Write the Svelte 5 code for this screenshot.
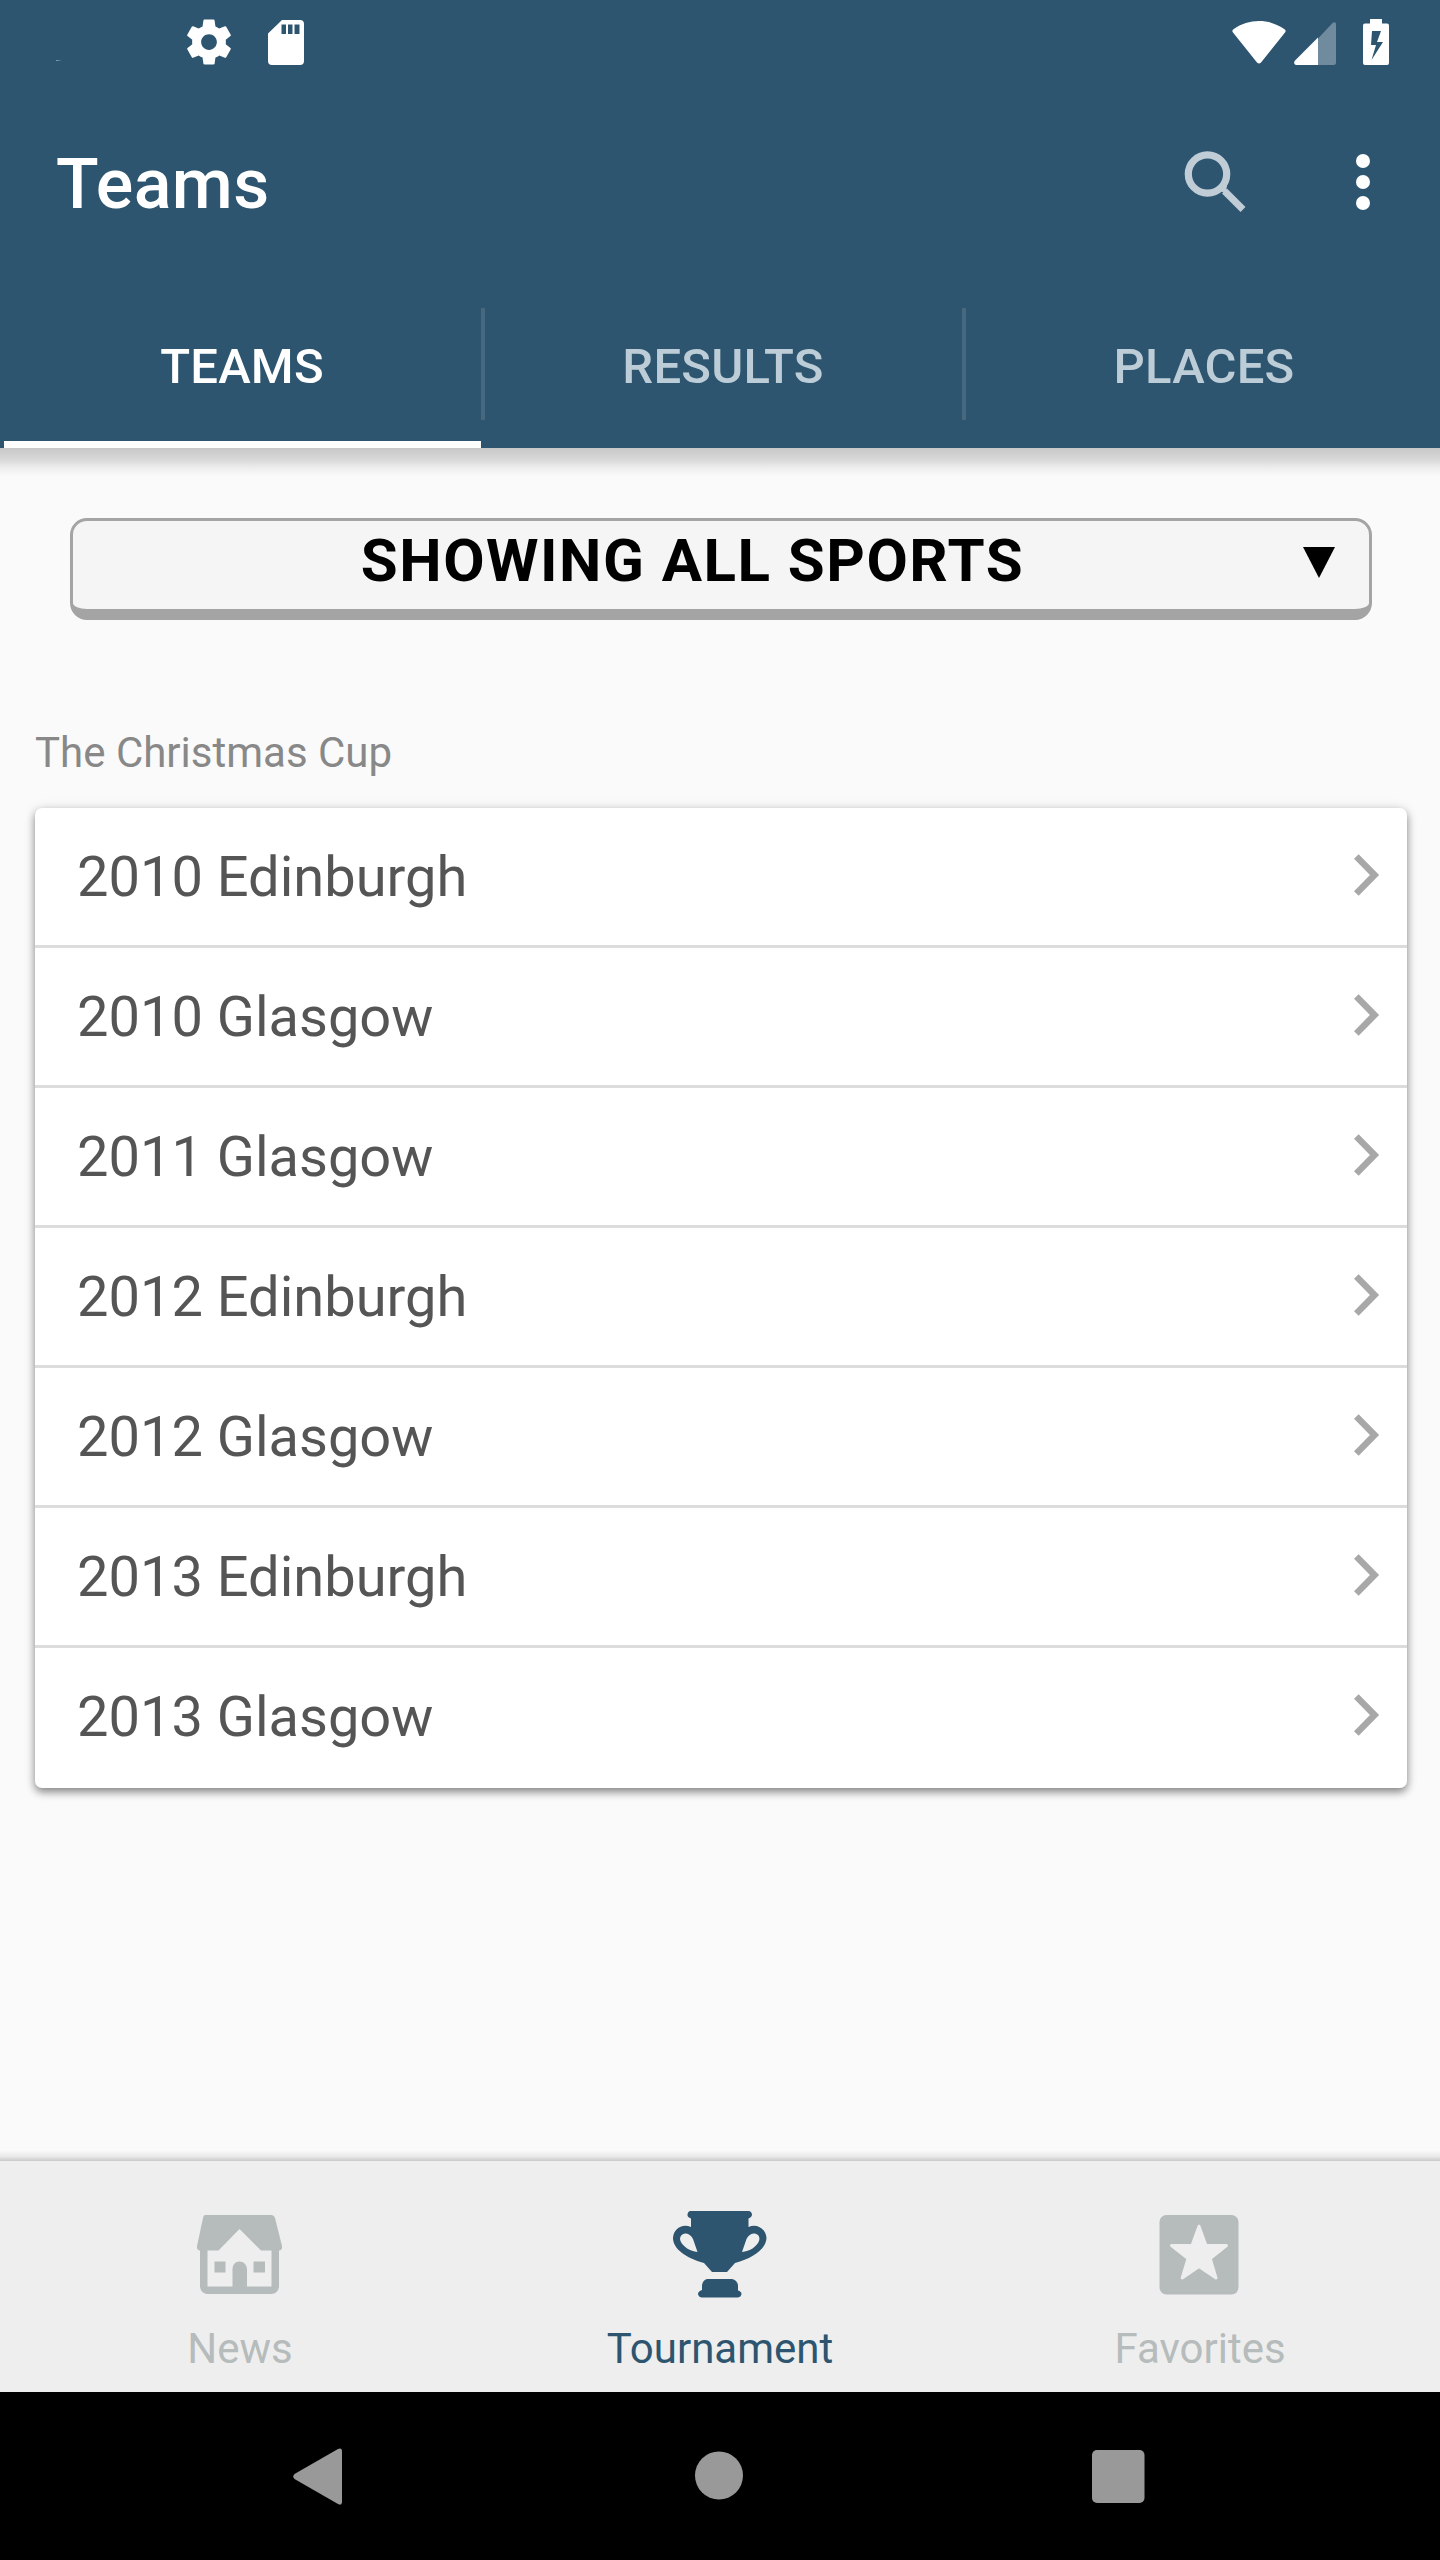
<script lang="ts">
	interface Team {
		year: number;
		city: string;
	}

	const tabs = ['Teams', 'Results', 'Places'];
	const teams: Team[] = [
		{ year: 2010, city: 'Edinburgh' },
		{ year: 2010, city: 'Glasgow' },
		{ year: 2011, city: 'Glasgow' },
		{ year: 2012, city: 'Edinburgh' },
		{ year: 2012, city: 'Glasgow' },
		{ year: 2013, city: 'Edinburgh' },
		{ year: 2013, city: 'Glasgow' }
	];
	const sections = ['News', 'Tournament', 'Favorites'];

	let activeTab = $state('Teams');
	let activeSection = $state('Tournament');
</script>

<div class="screen">
	<header>
		<div class="status-bar">
			<div class="status-group">
				<svg class="trace" width="6" height="2" viewBox="0 0 6 2"><path d="M0 0h6L0 1z" fill="#8aa6b6" /></svg>
				<svg class="gear" width="54" height="54" viewBox="0 0 24 24" fill="#fff">
					<path d="M19.43 12.98c.04-.32.07-.64.07-.98s-.03-.66-.07-.98l2.11-1.65c.19-.15.24-.42.12-.64l-2-3.46c-.12-.22-.39-.3-.61-.22l-2.49 1c-.52-.4-1.08-.73-1.69-.98l-.38-2.65C14.46 2.18 14.25 2 14 2h-4c-.25 0-.46.18-.49.42l-.38 2.65c-.61.25-1.17.59-1.69.98l-2.49-1c-.23-.09-.49 0-.61.22l-2 3.46c-.13.22-.07.49.12.64l2.11 1.65c-.04.32-.07.65-.07.98s.03.66.07.98l-2.11 1.65c-.19.15-.24.42-.12.64l2 3.46c.12.22.39.3.61.22l2.49-1c.52.4 1.08.73 1.69.98l.38 2.65c.03.24.24.42.49.42h4c.25 0 .46-.18.49-.42l.38-2.65c.61-.25 1.17-.59 1.69-.98l2.49 1c.23.09.49 0 .61-.22l2-3.46c.12-.22.07-.49-.12-.64l-2.11-1.65zM12 15.5c-1.93 0-3.5-1.57-3.5-3.5s1.57-3.5 3.5-3.5 3.5 1.57 3.5 3.5-1.57 3.5-3.5 3.5z" />
				</svg>
				<svg width="36" height="45" viewBox="0 0 36 45">
					<path fill="#fff" fill-rule="evenodd" d="M14 0H32Q36 0 36 4V41Q36 45 32 45H4Q0 45 0 41V13.500zM13.500 4.500v9.500h4.500v-9.500zM20 4.500v9.500h4.500v-9.500zM26.500 4.500v9.500h5v-9.500z" />
				</svg>
			</div>
			<div class="status-group">
				<svg width="54" height="43" viewBox="0 0 54 43">
					<path fill="#fff" d="M1 11.500Q-.5 9.500 1.500 8.200C17-2.600 37-2.600 52.500 8.200Q54.500 9.500 53 11.500L29 41.500Q27 43.500 25 41.500z" />
				</svg>
				<svg class="signal" width="42" height="43" viewBox="0 0 42 43">
					<path fill="#fff" fill-opacity=".32" d="M24 16.500L38.800.8Q42-1 42 2.500V40.500Q42 43 39.500 43H24z" />
					<path fill="#fff" d="M24 15.500V43H2Q-1 42 .8 38.800z" />
				</svg>
				<svg class="battery" width="26" height="46" viewBox="0 0 26 46">
					<path fill="#fff" fill-rule="evenodd" d="M7 0H19V4.500H24Q26 4.500 26 6.500V44Q26 46 24 46H2Q0 46 0 44V6.500Q0 4.500 2 4.500H7zM9 12L8 26h5L8.500 41 20 23h-6l4-11z" />
				</svg>
			</div>
		</div>
		<div class="toolbar">
			<h1>Teams</h1>
			<svg width="62" height="62" viewBox="0 0 62 62" fill="none" stroke="#c0cdd6">
				<circle cx="23.500" cy="23" r="19.200" stroke-width="7.200" />
				<path d="M37.500 37l4.500 1.500M40.500 40L59 58.500" stroke-width="7" />
			</svg>
			<svg class="more" width="14" height="56" viewBox="0 0 14 56" fill="#fff">
				<circle cx="7" cy="7" r="7" />
				<circle cx="7" cy="28" r="7" />
				<circle cx="7" cy="49" r="7" />
			</svg>
		</div>
		<nav class="tabs">
			{#each tabs as tab}
				<button class="tab" class:active={tab === activeTab} onclick={() => (activeTab = tab)}>{tab}</button>
			{/each}
		</nav>
	</header>

	<main>
		<button class="filter">
			<span>Showing all sports</span>
			<svg width="32" height="31" viewBox="0 0 32 31"><path d="M0 0h32L16 31z" /></svg>
		</button>

		<h2>The Christmas Cup</h2>
		<ul class="card">
			{#each teams as team}
				<li>
					<span>{team.year} {team.city}</span>
					<svg width="26" height="42" viewBox="0 0 26 42">
						<path d="M2.300 2.500L20.500 21 2.300 39.500" fill="none" stroke="#a8a8a8" stroke-width="6.600" />
					</svg>
				</li>
			{/each}
		</ul>
	</main>

	<nav class="bottom-bar">
		{#each sections as section}
			<button class="section" class:active={section === activeSection} onclick={() => (activeSection = section)}>
				<svg width="96" height="88" viewBox="0 0 96 88" fill="currentColor">
					{#if section === 'News'}
						<path fill-rule="evenodd" d="M14 4H80Q83 4 84 7L91 35Q91.500 39 88 39.500V76Q87 82 81 83H16Q10 82 9 76V39.500Q5.500 39 6 35L12 7Q12.500 4 14 4zM48.500 18L27.500 39.500H16.500V75.500H41.500V58Q42 50.500 48.500 50.500T56 58V75.500H80.500V39.500H70zM23.500 50.500h11v11h-11zM62.500 50.500h11.500v11h-11.500z" />
					{:else if section === 'Tournament'}
						<path d="M19.500 0H77.500Q80.500 0 81 3.500 81 6 77.500 7.500V16C86 12 95 18 95.500 27 95 38 82 47 64 52L56 61H41L33 52C15 47 2 38 2 27 2.500 18 11 12 20 16V7.500Q16 6 16.500 3.500 17 0 19.500 0z" />
						<path fill="#eee" d="M15 22.500C11 22 8 26 9.500 30 12 36 19 40 26.500 41L22 28Q19.500 23 15 22.500zM82.500 22.500C87 22 89.500 26 88 30 85.500 36 79 40 71 41L75.500 28Q78 23 82.500 22.500z" />
						<path d="M36 68H61Q66 69 67 74V79.500Q70.500 80.500 70.500 83 70 86 67 86.500H30.500Q27.500 86 27 83 27 80.500 31 79V74Q32 69 36 68z" />
					{:else}
						<rect x="8.500" y="4" width="79" height="79.500" rx="7" />
						<path fill="#eee" stroke="#eee" stroke-width="3" stroke-linejoin="round" d="M48 15.200L55 34.500H75.500L59.200 47.500 65 67 48 55.500 31.200 67 37 47.500 20.500 34.500H41z" />
					{/if}
				</svg>
				<span>{section}</span>
			</button>
		{/each}
	</nav>

	<div class="system-nav">
		<svg width="50" height="57" viewBox="0 0 50 57"><path d="M45 1Q49 -1 49 3.500V53.500Q49 58 45 56L1.500 31Q-1 28.500 1.500 26z" /></svg>
		<svg width="50" height="50" viewBox="0 0 50 50"><circle cx="26" cy="24.500" r="24" /></svg>
		<svg width="53" height="53" viewBox="0 0 53 53"><rect width="52.500" height="53" rx="5" /></svg>
	</div>
</div>

<style>
	:global(body) {
		margin: 0;
	}

	.screen {
		width: 1440px;
		height: 2560px;
		display: flex;
		flex-direction: column;
		background: #fafafa;
		font-family: Roboto, sans-serif;
		overflow: hidden;
	}

	svg {
		display: block;
		flex: none;
	}

	button {
		margin: 0;
		padding: 0;
		border: 0;
		background: none;
		font-family: inherit;
	}

	header {
		height: 448px;
		background: #2d556f;
		color: #fff;
	}

	.status-bar {
		height: 84px;
		display: flex;
		justify-content: space-between;
		padding: 0 51px 0 56px;
	}

	.status-group {
		display: flex;
		align-items: center;
	}

	.trace {
		margin: 38px 120px 0 0;
	}

	.gear {
		margin-right: 32px;
	}

	.signal {
		margin: 2px 27px 0 8px;
	}

	.toolbar {
		height: 196px;
		display: flex;
		align-items: center;
		padding: 0 70px 0 56px;
	}

	h1 {
		flex: 1;
		margin: 4px 0 0;
		font-size: 70px;
		line-height: 82px;
		font-weight: 500;
		letter-spacing: 0.4px;
	}

	.more {
		margin-left: 110px;
	}

	.tabs {
		display: flex;
		height: 168px;
		padding-left: 4px;
	}

	.tab {
		flex: none;
		width: 481px;
		position: relative;
		color: #bdcdd7;
		font-size: 49px;
		font-weight: 500;
		letter-spacing: 0.2px;
		text-transform: uppercase;
		padding: 4px 5px 0 0;
	}

	.tab.active {
		color: #fff;
	}

	.tab.active::before {
		content: '';
		position: absolute;
		left: 0;
		right: 4px;
		bottom: 0;
		height: 7px;
		background: #fff;
	}

	.tab:not(:last-child)::after {
		content: '';
		position: absolute;
		right: 0;
		top: 28px;
		width: 4px;
		height: 112px;
		background: #47697f;
	}

	main {
		flex: 1;
		padding: 70px 33px 0 35px;
		background:
			linear-gradient(transparent, rgba(0, 0, 0, 0.07) 60%, rgba(0, 0, 0, 0.2)) bottom / 100% 11px no-repeat,
			linear-gradient(#c8c8c8, #d9d9d9 12px, #eee 20px, #fafafa 28px);
	}

	.filter {
		display: flex;
		width: 1302px;
		height: 102px;
		margin-left: 35px;
		padding: 0 34px 5px 9px;
		box-sizing: border-box;
		align-items: center;
		border: 3px solid #a4a4a4;
		border-bottom-width: 11px;
		border-radius: 17px;
		background: #f5f5f5;
		color: #000;
		font-size: 60px;
		font-weight: 700;
		letter-spacing: 1.5px;
		text-transform: uppercase;
	}

	.filter span {
		flex: 1;
		margin-top: -4px;
		line-height: 70px;
	}

	h2 {
		margin: 108px 0 0;
		font-size: 42px;
		line-height: 50px;
		font-weight: 400;
		color: #888;
	}

	.card {
		list-style: none;
		margin: 30px 0 0;
		padding: 0;
		border-radius: 7px;
		background: #fff;
		box-shadow: 0 4px 8px rgba(0, 0, 0, 0.45), 0 0 14px rgba(0, 0, 0, 0.07);
	}

	.card li {
		display: flex;
		align-items: center;
		justify-content: space-between;
		height: 140px;
		box-sizing: border-box;
		padding: 0 27px 4px 42px;
		border-bottom: 3px solid #dcdcdc;
		color: #555;
		font-size: 56px;
	}

	.card li span {
		padding-top: 4px;
	}

	.card li:last-child {
		border-bottom-color: transparent;
	}

	.bottom-bar {
		display: flex;
		height: 231px;
		background: #eee;
	}

	.section {
		flex: 1;
		display: flex;
		flex-direction: column;
		align-items: center;
		padding-top: 50px;
		color: #b6bbbb;
		font-size: 42px;
	}

	.section svg {
		margin-right: 3px;
	}

	.section span {
		margin-top: 25px;
		line-height: 50px;
	}

	.section.active {
		color: #2d556f;
	}

	.system-nav {
		display: flex;
		align-items: center;
		justify-content: space-between;
		height: 168px;
		box-sizing: border-box;
		padding: 0 295px 0 293px;
		background: #000;
		fill: #999;
	}
</style>
